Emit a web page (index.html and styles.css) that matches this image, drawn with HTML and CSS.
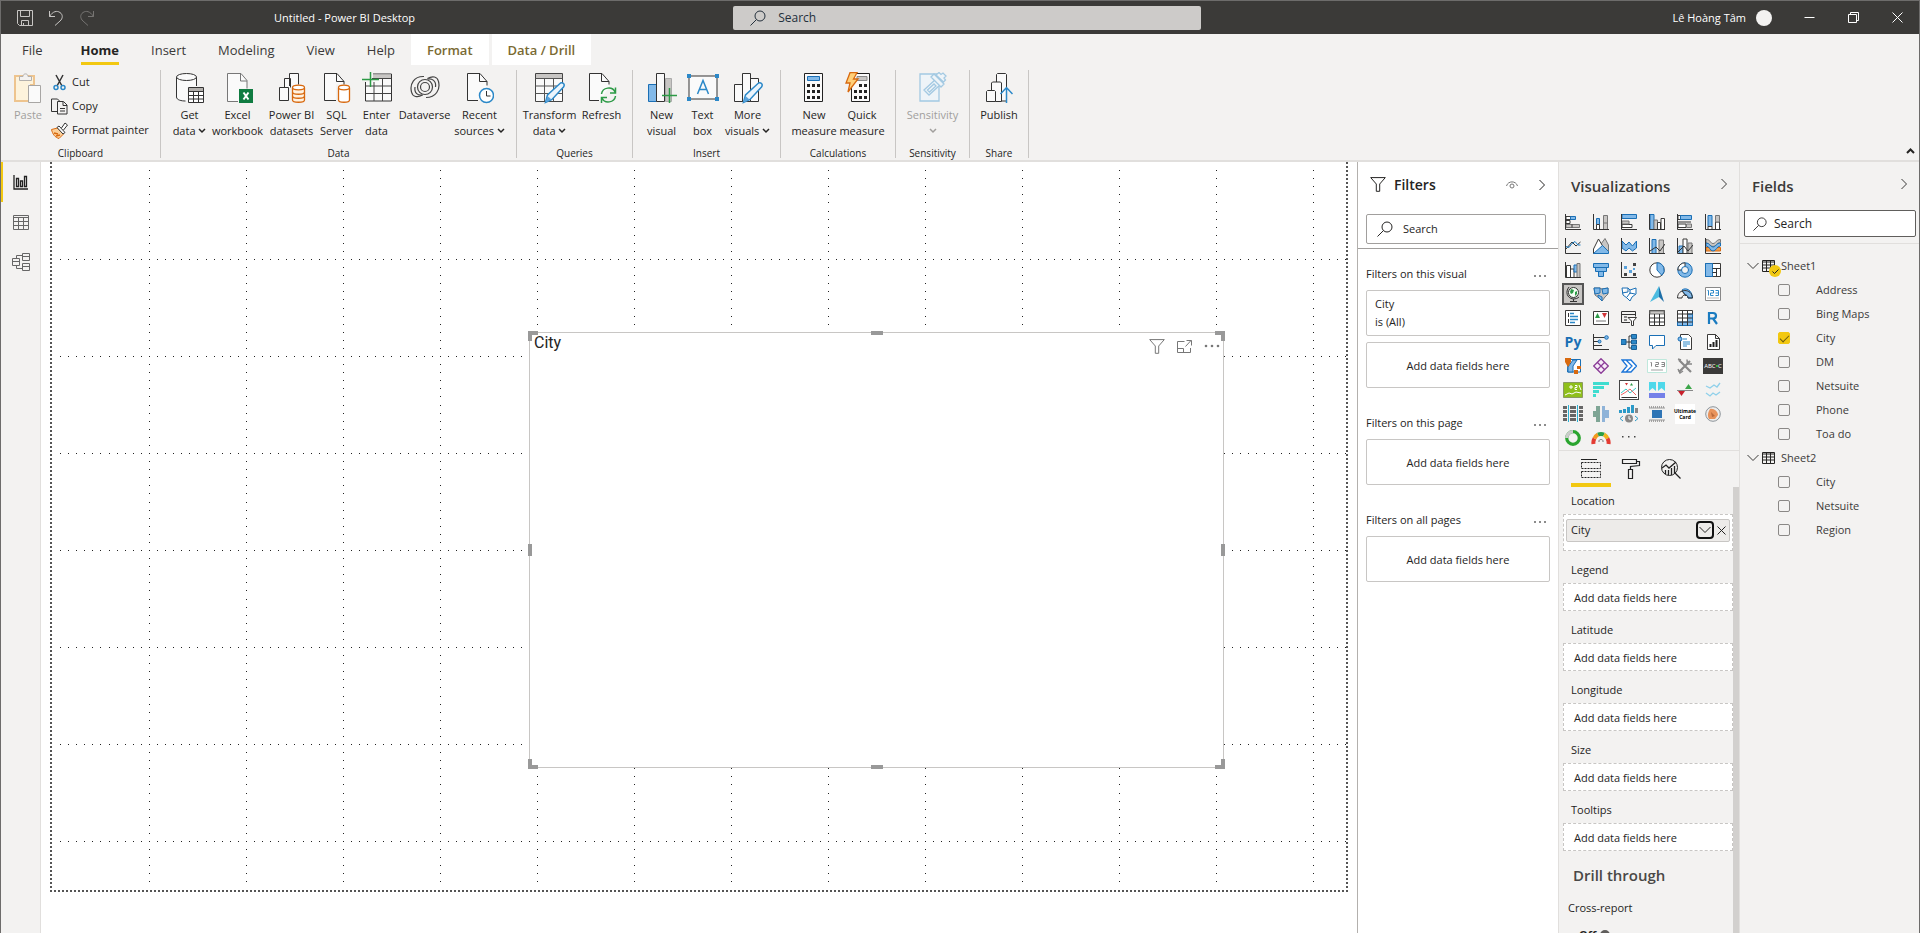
FILE: index.html
```html
<!DOCTYPE html>
<html lang="en">
<head>
<meta charset="utf-8">
<title>Untitled - Power BI Desktop</title>
<link rel="stylesheet" href="styles.css">
</head>
<body>
<svg class="defs" aria-hidden="true">
  <symbol id="chev" viewBox="0 0 8 12"><path d="M1.500 1l5 5-5 5"/></symbol>
  <symbol id="down" viewBox="0 0 8 6"><path d="M1 1l3 3 3-3"/></symbol>
  <symbol id="wide" viewBox="0 0 12 8"><path d="M.5 1L6 6.500 11.500 1"/></symbol>
  <symbol id="lens" viewBox="0 0 16 16"><circle cx="10" cy="6" r="5"/><path d="M6.500 9.500L.5 15.500"/></symbol>
  <symbol id="funnel" viewBox="0 0 16 15"><path d="M.7.600h14.600L9.700 7v7.300H6.300V7z"/></symbol>
  <symbol id="dots" viewBox="0 0 14 4"><circle cx="2" cy="2" r="1"/><circle cx="7" cy="2" r="1"/><circle cx="12" cy="2" r="1"/></symbol>
  <symbol id="grid" viewBox="0 0 13 12"><path d="M.500.500h12v11H.500zM.500 2h12M.500 5h12M.500 8h12M4.500 1v10.500M8.500 1v10.500"/></symbol>
</svg>
<div class="window">
  <header class="titlebar">
    <div class="title-left">
      <button class="tool" aria-label="Save"><svg width="16" height="16" viewBox="0 0 16 16"><path d="M.5.500h15v15h-13l-2-2zM3.500.500v6h9v-6M4.500 15.500v-5h7v5M6.500 13v2.500"/></svg></button>
      <button class="tool" aria-label="Undo"><svg width="16" height="16" viewBox="0 0 16 16"><path d="M1.500 1v5.500H7M1.500 6.500C5 1 9 .500 12 2.500s3 6 0 8.500l-5 4.500"/></svg></button>
      <button class="tool dim" aria-label="Redo"><svg width="16" height="16" viewBox="0 0 16 16"><path d="M14.500 1v5.500H9M14.500 6.500C11 1 7 .500 4 2.500s-3 6 0 8.500l5 4.500"/></svg></button>
      <h1 class="doc-title">Untitled - Power BI Desktop</h1>
    </div>
    <label class="title-search"><svg width="16" height="16"><use href="#lens"/></svg><input type="text" placeholder="Search" aria-label="Search"></label>
    <div class="title-right">
      <span>Lê Hoàng Tâm</span><span class="avatar"></span>
      <button class="win" aria-label="Minimize"><svg width="11" height="11" viewBox="0 0 11 11"><path d="M.5 5.500h10"/></svg></button>
      <button class="win" aria-label="Restore"><svg width="11" height="11" viewBox="0 0 11 11"><path d="M.5 2.500h8v8h-8zM2.500 2.500v-2h8v8h-2"/></svg></button>
      <button class="win" aria-label="Close"><svg width="11" height="11" viewBox="0 0 11 11"><path d="M.5.500l10 10M10.500.500l-10 10"/></svg></button>
    </div>
  </header>

  <nav class="tabs">
    <button class="tab file">File</button>
    <button class="tab on"><span>Home</span></button>
    <button class="tab">Insert</button>
    <button class="tab">Modeling</button>
    <button class="tab">View</button>
    <button class="tab">Help</button>
    <button class="tab ctx">Format</button>
    <button class="tab ctx">Data / Drill</button>
  </nav>

  <section class="ribbon">
    <div class="group g-clip"><div class="items">
      <button class="cmd w44 off"><svg width="28" height="32" viewBox="0 0 28 32"><path d="M5 4H1v25h13" fill="#fdf3dc" stroke="#eec48e" stroke-width="2"/><path d="M5 4h12v8h3V4h-3" fill="#fdf3dc" stroke="#eec48e" stroke-width="2"/><path d="M2 5h17v7h-5v16H2z" fill="#fdf3dc"/><path d="M5.500 8.500v-4h3.500C9 1 14 1 14 4.500h3.500v4z" fill="#f3f2f1" stroke="#b3b0ad"/><path d="M14.500 13.500h12v17h-12z" fill="#fafafa" stroke="#a8a6a4"/></svg><span>Paste</span></button>
      <div class="stack">
        <button class="line"><svg width="17" height="17" viewBox="0 0 17 17"><path d="M5 1l6 11M12 1L6 12" stroke="#333" stroke-width="1.500"/><circle cx="5" cy="13.500" r="2" fill="none" stroke="#2b88c8" stroke-width="1.500"/><circle cx="12" cy="13.500" r="2" fill="none" stroke="#2b88c8" stroke-width="1.500"/></svg>Cut</button>
        <button class="line"><svg width="17" height="17" viewBox="0 0 17 17"><path d="M7 13.500H.5V1h6l2 2M6.500 3.500h6l3.500 3.500v9H6.500zM12 4v3.500h4M9 10.500h5M9 13h5" fill="none" stroke="#333"/></svg>Copy</button>
        <button class="line"><svg width="17" height="17" viewBox="0 0 17 17"><path d="M.5 7.500l6-1.500 6 6-4.500 4.500C4 15.500 1.500 12 .5 7.500z" fill="#fbd09a" stroke="#d8690f"/><path d="M3 11l4 1M5 14l4-1" stroke="#d8690f" stroke-width="1.500"/><path d="M6 5.500L8 4l6 6.500-2 1.500zM10.500 6L14 1l2.500 2-4 5" fill="#fff" stroke="#333"/></svg>Format painter</button>
      </div></div><span class="cap">Clipboard</span></div>

    <div class="group g-data"><div class="items">
      <button class="cmd w42"><svg width="30" height="32" viewBox="0 0 30 32"><path d="M1.500 5v20c0 3 5 4 9 4h2V15h9V5" fill="#fafafa"/><path d="M1.500 5v20c0 3 5 4 9 4M21.500 5v9" fill="none" stroke="#333"/><ellipse cx="11.500" cy="5" rx="10" ry="3.500" fill="#fafafa" stroke="#333"/><path d="M13.500 15.500h15v15h-15z" fill="#fff" stroke="#333"/><path d="M14 16h14v3H14z" fill="#b3b0ad"/><path d="M13.500 19.500h15M13.500 23.500h15M13.500 27h15M18.500 19v12M23.500 19v12" stroke="#333"/></svg><span>Get<br>data <svg class="dd" width="8" height="6"><use href="#down"/></svg></span></button>
      <button class="cmd w54"><svg width="30" height="32" viewBox="0 0 30 32"><path d="M4.500 29.500V1.500H18l6 7v8h-8v13z" fill="#fafafa"/><path d="M15 29.500H4.500V1.500H18l6 7v8M17.500 2v7H24" fill="none" stroke="#777"/><path d="M16 17h14v14H16z" fill="#107c41"/><path d="M20.500 20.500l5 7M25.500 20.500l-5 7" stroke="#fff" stroke-width="2"/></svg><span>Excel<br>workbook</span></button>
      <button class="cmd w54"><svg width="28" height="32" viewBox="0 0 28 32"><path d="M6.500 15V6.500h6v9M11.500 14V1.500h9v11M1.500 15.500h9v13h-9z" fill="#fafafa" stroke="#333"/><path d="M14.500 16v12c0 3 12 3 12 0V16" fill="#fff2e0" stroke="#d8690f" stroke-width="1.300"/><ellipse cx="20.500" cy="15.500" rx="6" ry="2.300" fill="#fff" stroke="#d8690f" stroke-width="1.300"/><path d="M14.500 20c0 3 12 3 12 0M14.500 24c0 3 12 3 12 0" fill="none" stroke="#d8690f" stroke-width="1.300"/></svg><span>Power BI<br>datasets</span></button>
      <button class="cmd w36"><svg width="28" height="32" viewBox="0 0 28 32"><path d="M1.500 28.500v-27H14l7 8v3h-8v16z" fill="#fafafa"/><path d="M13 28.500H1.500v-27H14l7 8v3M13.500 2v7.500H21" fill="none" stroke="#333"/><path d="M15.500 16v12c0 3 11 3 11 0V16" fill="#fff" stroke="#d8690f" stroke-width="1.300"/><ellipse cx="21" cy="15.500" rx="5.500" ry="2.300" fill="#fff" stroke="#d8690f" stroke-width="1.300"/></svg><span>SQL<br>Server</span></button>
      <button class="cmd w44"><svg width="30" height="32" viewBox="0 0 30 32"><path d="M3.500 10v19h26v-27H11v8z" fill="#fafafa"/><path d="M3.500 10v19h26v-27H11" fill="none" stroke="#333"/><path d="M11 2.500h18v4H11z" fill="#c8c6c4"/><path d="M10 6.500h19.500M3.500 14h26M3.500 21.500h26M12 10v19M20.500 6v23" stroke="#444"/><path d="M8.500 0v15M0 7.500h17" stroke="#2c9a46" stroke-width="1.500"/></svg><span>Enter<br>data</span></button>
      <button class="cmd w52"><svg width="30" height="32" viewBox="0 0 30 32"><g fill="none" stroke="#444" stroke-width="1.200"><path d="M14 4.500C4 4-.5 12 1.500 20c1 5 6 6 11 3"/><path d="M16 25.500c10 0 14.500-8 12.500-16-1-5-6-6-11-3"/><circle cx="15" cy="15" r="4.500"/><circle cx="15" cy="15" r="7.500"/><path d="M12.500 23C8 24 4 21 5 15M17.500 7c4.500-1 9 2 8 8"/></g></svg><span>Dataverse</span></button>
      <button class="cmd w58"><svg width="28" height="32" viewBox="0 0 28 32"><path d="M1.500 28.500v-27H14l7 8v7l-9 12z" fill="#fafafa"/><path d="M12 28.500H1.500v-27H14l7 8v4M13.500 2v7.500H21" fill="none" stroke="#333"/><circle cx="20.500" cy="23.500" r="7" fill="#fff" stroke="#2b88c8" stroke-width="1.500"/><path d="M20.500 19v5h4" fill="none" stroke="#333"/></svg><span>Recent<br>sources <svg class="dd" width="8" height="6"><use href="#down"/></svg></span></button>
      </div><span class="cap">Data</span></div>

    <div class="group g-query"><div class="items">
      <button class="cmd w54"><svg width="30" height="32" viewBox="0 0 30 32"><path d="M.5 1.500h27v28H.5z" fill="#fafafa" stroke="#444"/><path d="M1 2h26v4H1z" fill="#c8c6c4"/><path d="M.5 6.500h27M.5 14h27M.5 21.500h27M9.500 6v23M18.500 6v23" stroke="#555"/><path d="M10.500 30.500l2-7.500 13-12c2-1 5 1 3 4L17 27.500z" fill="#eaf4fc" stroke="#2b88c8" stroke-width="1.500"/><path d="M10.500 30.500l2-6.500 4 3.500z" fill="#5ba3dc"/></svg><span>Transform<br>data <svg class="dd" width="8" height="6"><use href="#down"/></svg></span></button>
      <button class="cmd w50"><svg width="30" height="32" viewBox="0 0 30 32"><path d="M2.500 28.500v-27H15l7 8v6l-9 13z" fill="#fafafa"/><path d="M12 28.500H2.500v-27H15l7 8v3M14.500 2v7.500H22" fill="none" stroke="#333"/><path d="M14.500 22c1-7 11-8 13.500-2M28.500 24c-1 7-11 8-13.500 2M28.500 15.500V21H23M14.500 31v-5.500H20" fill="none" stroke="#2c9a46" stroke-width="1.500"/></svg><span>Refresh</span></button>
      </div><span class="cap">Queries</span></div>

    <div class="group g-insert"><div class="items">
      <button class="cmd w42"><svg width="30" height="32" viewBox="0 0 30 32"><path d="M18.500 6.500h6v23h-6z" fill="#c8c6c4" stroke="#aaa"/><path d="M1.500 12.500h8v17h-8z" fill="#82b9e8" stroke="#1a6fb5"/><path d="M9.500 1.500h8v28h-8z" fill="#fafafa" stroke="#333"/><path d="M22.500 16v15M15 23.500h15" stroke="#2c9a46" stroke-width="1.500"/></svg><span>New<br>visual</span></button>
      <button class="cmd w40"><svg width="32" height="32" viewBox="0 0 32 32"><path d="M2 4h28v23H2z" fill="#fafafa" stroke="#333"/><path d="M0 2h4v4H0zM28 2h4v4h-4zM0 25h4v4H0zM28 25h4v4h-4z" fill="#2b88c8"/><path d="M10.500 22L16 8.500 21.500 22M12.500 17.500h7" fill="none" stroke="#2b88c8" stroke-width="1.500"/></svg><span>Text<br>box</span></button>
      <button class="cmd w50"><svg width="30" height="32" viewBox="0 0 30 32"><path d="M17.500 6.500h8v23h-8zM1.500 12.500h8v17h-8zM9.500 1.500h8v28h-8z" fill="#fafafa" stroke="#333"/><path d="M10.500 30.500l2-7.500 13-12c2-1 5 1 3 4L17 27.500z" fill="#eaf4fc" stroke="#2b88c8" stroke-width="1.500"/><path d="M10.500 30.500l2-6.500 4 3.500z" fill="#5ba3dc"/></svg><span>More<br>visuals <svg class="dd" width="8" height="6"><use href="#down"/></svg></span></button>
      </div><span class="cap">Insert</span></div>

    <div class="group g-calc"><div class="items">
      <button class="cmd w48"><svg width="22" height="32" viewBox="0 0 22 32"><path d="M1.500 1.500h18v28h-18z" fill="#fafafa" stroke="#222"/><path d="M4.500 4.500h12v4h-12z" fill="#82b9e8" stroke="#1a6fb5"/><path d="M4 12h3v3H4zM9 12h3v3H9zM14 12h3v3h-3zM4 18h3v3H4zM9 18h3v3H9zM14 18h3v3h-3zM4 24h3v3H4zM9 24h3v3H9zM14 24h3v3h-3z" fill="#222"/></svg><span>New<br>measure</span></button>
      <button class="cmd w48 quick"><svg width="28" height="32" viewBox="0 0 28 32"><path d="M6.500 1.500h18v28h-18z" fill="#fafafa" stroke="#222"/><path d="M12 4.500h10v4H12z" fill="#c8c6c4" stroke="#888"/><path d="M14 12h3v3h-3zM19 12h3v3h-3zM9 18h3v3H9zM14 18h3v3h-3zM19 18h3v3h-3zM9 24h3v3H9zM14 24h3v3h-3zM19 24h3v3h-3z" fill="#222"/><path d="M5 .7h7L8.500 7H13L3 20l2-9H1z" fill="#ffd079" stroke="#d8690f" stroke-width="1.300"/></svg><span>Quick<br>measure</span></button>
      </div><span class="cap">Calculations</span></div>

    <div class="group g-sens"><div class="items">
      <button class="cmd w58 off"><svg width="28" height="32" viewBox="0 0 28 32"><g fill="#eef4f8" stroke="#a3c9e2" stroke-width="1.300"><path d="M1 2h19v27H1z"/><path d="M5 18L16 8l5 5L10 23zM8.500 18l2 2 6.500-6-2-2z"/><path d="M12 5l3-3 10 10-3 3zM17 3l3-2.500 2 2 2-1.500 3 3-2 2 1.500 2-2 2z"/></g></svg><span>Sensitivity<br><svg class="dd" width="8" height="6"><use href="#down"/></svg></span></button>
      </div><span class="cap">Sensitivity</span></div>

    <div class="group g-share"><div class="items">
      <button class="cmd w48"><svg width="28" height="32" viewBox="0 0 28 32"><path d="M11.500 10V2.500l1-1h8l1 1V29h-5M6.500 18v-7l1-1h8l1 1v18.500h-6M1.500 29.500v-10l1-1h7l1 1v10z" fill="#fafafa" stroke="#333"/><path d="M21.500 31V16M15.500 22l6-6.500 6 6.500" fill="none" stroke="#2b88c8" stroke-width="1.500"/></svg><span>Publish</span></button>
      </div><span class="cap">Share</span></div>
    <button class="collapse" aria-label="Collapse ribbon"><svg width="9" height="6" viewBox="0 0 9 6"><path d="M1 5l3.500-3.500L8 5"/></svg></button>
  </section>

  <main class="workspace">
    <nav class="rail">
      <button class="view on" aria-label="Report view"><svg width="15" height="15" viewBox="0 0 15 15"><path d="M1 0v14h14" fill="none" stroke="#222" stroke-width="1.300"/><path d="M3.500 3.500h2v8h-2zM7.500 6h2v5.500h-2zM11.500 1.500h2v10h-2z" fill="none" stroke="#222" stroke-width="1.300"/></svg></button>
      <button class="view" aria-label="Data view"><svg width="16" height="15" viewBox="0 0 16 15"><path d="M.5.500h15v14H.5zM.5 2.500h15M.5 6.500h15M.5 10.500h15M5.500 2.500v12M10.500 2.500v12" fill="none" stroke="#666"/></svg></button>
      <button class="view" aria-label="Model view"><svg width="18" height="18" viewBox="0 0 18 18"><path d="M.5 5.500h7v7h-7zM.5 8.500h7M10.500.500h7v7h-7zM10.500 3.500h7M10.500 10.500h7v7h-7zM10.500 13.500h7M4.500 5.500v-3h6M4.500 12.500v3h6" fill="none" stroke="#666"/></svg></button>
    </nav>

    <section class="canvas">
      <div class="page">
        <svg class="gridlines" width="100%" height="100%" aria-hidden="true">
          <defs><pattern id="dotgrid" width="97" height="97" patternUnits="userSpaceOnUse"><path fill="#222" d="M0 0h1v1H0zM8 0h1v1H8zM16 0h1v1h-1zM24 0h1v1h-1zM32 0h1v1h-1zM40 0h1v1h-1zM48 0h1v1h-1zM57 0h1v1h-1zM65 0h1v1h-1zM73 0h1v1h-1zM81 0h1v1h-1zM89 0h1v1h-1zM0 8h1v1H0zM0 16h1v1H0zM0 24h1v1H0zM0 32h1v1H0zM0 40h1v1H0zM0 49h1v1H0zM0 57h1v1H0zM0 65h1v1H0zM0 73h1v1H0zM0 81h1v1H0zM0 89h1v1H0z"/></pattern></defs>
          <rect x="2" y="2" width="100%" height="100%" fill="url(#dotgrid)"/>
        </svg>
        <article class="visual">
          <h2>City</h2>
          <div class="visual-tools">
            <button aria-label="Filter"><svg width="16" height="15"><use href="#funnel"/></svg></button>
            <button aria-label="Focus mode"><svg width="15" height="13" viewBox="0 0 15 13"><path d="M7.500 1.500H.5v11h13V8M.5 8.500h6v4M8.500 6.500l5.500-6M9.500.500h5v5"/></svg></button>
            <button aria-label="More options"><svg class="dots" width="16" height="4" viewBox="0 0 16 4"><circle cx="2" cy="2" r="1.300"/><circle cx="8" cy="2" r="1.300"/><circle cx="14" cy="2" r="1.300"/></svg></button>
          </div>
          <i class="h c tl"></i><i class="h c tr"></i><i class="h c bl"></i><i class="h c br"></i>
          <i class="h n"></i><i class="h s"></i><i class="h w"></i><i class="h e"></i>
        </article>
      </div>
    </section>

    <aside class="filters">
      <div class="head"><svg width="16" height="15"><use href="#funnel"/></svg><h2>Filters</h2>
        <button class="eye" aria-label="Hide filters"><svg width="12" height="8" viewBox="0 0 12 8"><path d="M.5 5C2-.500 10-.500 11.500 5" /><circle cx="6" cy="5" r="2"/></svg></button>
        <button aria-label="Collapse"><svg width="8" height="12"><use href="#chev"/></svg></button></div>
      <label class="search"><svg width="16" height="16"><use href="#lens"/></svg><input type="text" placeholder="Search" aria-label="Search filters"></label>
      <section class="fgroup"><h3>Filters on this visual<button aria-label="More"><svg class="dots" width="14" height="4"><use href="#dots"/></svg></button></h3>
        <div class="card">City<br>is (All)</div><div class="card drop">Add data fields here</div></section>
      <section class="fgroup"><h3>Filters on this page<button aria-label="More"><svg class="dots" width="14" height="4"><use href="#dots"/></svg></button></h3>
        <div class="card drop">Add data fields here</div></section>
      <section class="fgroup"><h3>Filters on all pages<button aria-label="More"><svg class="dots" width="14" height="4"><use href="#dots"/></svg></button></h3>
        <div class="card drop">Add data fields here</div></section>
    </aside>

    <aside class="viz">
      <div class="head"><h2>Visualizations</h2><button aria-label="Collapse"><svg width="8" height="12"><use href="#chev"/></svg></button></div>
      <div class="gallery">
        <button aria-label="Stacked bar chart"><svg viewBox="0 0 16 16"><path class="w" d="M1 2.500h5v3H1zM1 6.500h4v3H1z"/><path class="b" d="M5.500 2.500h5v3h-5z"/><path class="g" d="M1 10.500h13.500v3H1z"/><path class="k" d="M.500 0v15.500H16M7 10.500v3"/></svg></button>
        <button aria-label="Stacked column chart"><svg viewBox="0 0 16 16"><path class="b" d="M3.500 4.500h3v6h-3z"/><path class="w" d="M3.500 10.500h3v5h-3z"/><path class="g" d="M10.500 1.500h4v14h-4zM10.500 9h4"/><path class="k" d="M.500 0v15.500H16"/></svg></button>
        <button aria-label="Clustered bar chart"><svg viewBox="0 0 16 16"><path class="b" d="M1 .500h14.500v4H1z"/><path class="w" d="M1 10.500h10v3H1z"/><path class="g" d="M1 7h7v3H1z"/><path class="k" d="M.500 0v15.500H16"/></svg></button>
        <button aria-label="Clustered column chart"><svg viewBox="0 0 16 16"><path class="b" d="M1 .500h4v15H1z"/><path class="g" d="M5 6h3.500v9.500H5z"/><path class="w" d="M8.500 8.500h3v7h-3zM12 4.500h3.500v11H12z"/><path class="k" d="M.500 0v15.500H16"/></svg></button>
        <button aria-label="100% stacked bar chart"><svg viewBox="0 0 16 16"><path class="w" d="M1 1.500h3v4H1zM1 10h8v3.500H1z"/><path class="b" d="M3.500 1.500h11v4h-11z"/><path class="g" d="M9.500 10h5v3.500h-5z"/><path class="k" d="M.500 0v15.500H16M1 8h13"/></svg></button>
        <button aria-label="100% stacked column chart"><svg viewBox="0 0 16 16"><path class="b" d="M3 1.500h4v11H3z"/><path class="w" d="M3 12.500h4v3H3zM10.500 8h4v7.500h-4z"/><path class="g" d="M10.500 1.500h4V8h-4z"/><path class="k" d="M.500 0v15.500H16"/></svg></button>

        <button aria-label="Line chart"><svg viewBox="0 0 16 16"><path class="k" d="M.500 0v15.500H16M1 11l6-7 4 4 4.500-4"/><path class="bl" d="M1 8.500l3 1 3-4 3-2 3 3.500 2.500 0"/></svg></button>
        <button aria-label="Area chart"><svg viewBox="0 0 16 16"><path class="g" d="M8 6l4-5.500L15.500 7v8z"/><path class="w" d="M.5 11L5.500 1 12 12v3.500H.5z"/><path class="b" d="M.5 15.500l9-8 6 6v2z"/></svg></button>
        <button aria-label="Stacked area chart"><svg viewBox="0 0 16 16"><path class="b" d="M1 3l4 4 3-3 3.500 4 4-5v7l-4 3L8 10l-3 3-4-3z"/><path class="k" d="M.500 0v15.500H16"/></svg></button>
        <button aria-label="Line and stacked column chart"><svg viewBox="0 0 16 16"><path class="b" d="M3 1.500h4v14H3z"/><path class="g" d="M10 2h4.500v13.500H10z"/><path class="k" d="M.500 0v15.500H16M1 13l6-4 4 4 5-7"/></svg></button>
        <button aria-label="Line and clustered column chart"><svg viewBox="0 0 16 16"><path class="b" d="M2 8h4v7.500H2z"/><path class="w" d="M6 1h4v14.500H6z"/><path class="g" d="M11 5h4v10.500h-4z"/><path class="k" d="M.500 0v15.500H16M1 14l6-6 4 5 5-6"/></svg></button>
        <button aria-label="Ribbon chart"><svg viewBox="0 0 16 16"><path class="g" d="M1 1.500c5 0 4 4 7 4s3-4 7.500-4v3c-4 0-4 4-7.500 4S5 5 1 5z"/><path d="M1 9.500h14.500v3.500H1z" fill="#f0a050" stroke="#d8690f"/><path class="b" d="M1 5c4 0 4 4 7 4s3-4 7.500-4v3c-4 0-4 5-7.500 5S5 8 1 8z"/><path class="k" d="M.500 0v15.500H16"/></svg></button>

        <button aria-label="Waterfall chart"><svg viewBox="0 0 16 16"><path class="w" d="M1.500 3.500h4v12h-4zM5.500 7h3.500v8.500H5.500z"/><path class="b" d="M9 3h4v7H9z"/><path class="g" d="M12 1.500h3v14h-3z"/><path class="k" d="M.500 0v15.500H16"/></svg></button>
        <button aria-label="Funnel"><svg viewBox="0 0 16 16"><path class="b" d="M.500 1.500h15v4H.500zM2.500 5.500h11v4h-11zM5.500 9.500h5v5h-5z"/></svg></button>
        <button aria-label="Scatter chart"><svg viewBox="0 0 16 16"><path class="k" d="M.500 0v15.500H16"/><path d="M3 4h3v3H3zM8 8h3v3H8zM12 6h2v2h-2z" fill="#5ba3dc"/><path d="M12 1h3v3h-3zM3 11h3v3H3zM12 11h3v3h-3z" fill="#444"/></svg></button>
        <button aria-label="Pie chart"><svg viewBox="0 0 16 16"><circle class="w" cx="8" cy="8" r="7.200"/><path class="b" d="M8 .800V8l4.800 5.300A7.200 7.200 0 0 0 8 .800z"/></svg></button>
        <button aria-label="Donut chart"><svg viewBox="0 0 16 16"><circle class="b" cx="8" cy="8" r="7.200"/><path class="w" d="M8 8V.800A7.200 7.200 0 0 0 .800 8z"/><circle class="b hole" cx="8" cy="8" r="3.500"/></svg></button>
        <button aria-label="Treemap"><svg viewBox="0 0 16 16"><path class="w" d="M.500 1.500h15v13H.500z"/><path class="b" d="M.500 1.500h7v13h-7z"/><path class="k" d="M7.500 6.500h8M11.500 6.500v8M7.500 10.500h4"/></svg></button>

        <button class="picked" aria-label="Map"><svg viewBox="0 0 16 16"><circle cx="8.500" cy="6.500" r="5" fill="#f5fff5" stroke="#333"/><path d="M6 3l3 1-1 3-2 1-1-2zM10 6l2-1v3l-2 2z" fill="#2c9a46"/><path class="k" d="M4 1c-4 5-2 11 4 12 3 0 5-1 6-2M8.500 13v2M5 15.500h7"/></svg></button>
        <button aria-label="Filled map"><svg viewBox="0 0 16 16"><path class="g" d="M1 2h6l2 1 6-1v6l-3 3-3 4-3-3-4-3z"/><path class="b" d="M1 2h6v5L2 8zM9 3l6-1v5l-5 1zM5 9l4 2v4l-4-4z"/></svg></button>
        <button aria-label="Shape map"><svg viewBox="0 0 16 16"><path class="w bs" d="M1 2h6l2 2 6-2v6l-4 3-2 4-3-3-4-3zM1 7l6-1v-4M6 11l3-4 5 1M9 4v4"/></svg></button>
        <button aria-label="Azure map"><svg viewBox="0 0 16 16"><path d="M10 0L1 16l9-5z" fill="#4cbbe0"/><path d="M10 0l5 16-5-5z" fill="#1d6fa8"/></svg></button>
        <button aria-label="Gauge"><svg viewBox="0 0 16 16"><path class="b" d="M5 4C9 1 15 4 15.500 12H11c0-2-1-3-3-3.500z"/><path class="k" d="M.500 12C.500 2 15 2 15.500 12H11C11 8 5 8 5 12zM5 5l4 5"/></svg></button>
        <button aria-label="Card"><svg viewBox="0 0 16 16"><path d="M.500 1.500h15v13H.500z" fill="#fff" stroke="#888"/><path d="M2.500 4.500h1v5M5.500 4.500h3v2.500h-3v2.500h3M10.500 4.500h3v5h-3M10.500 7h3" fill="none" stroke="#2b88c8"/><path d="M2 12h12" stroke="#bbb"/></svg></button>

        <button aria-label="Multi-row card"><svg viewBox="0 0 16 16"><path class="w" d="M.500.500h15v15H.500z"/><path d="M3.500 3v4M3.500 9v4" stroke="#333"/><path d="M5 3.500h4M5 6.500h8M5 9.500h8M5 12.500h5" stroke="#2b88c8" stroke-width="1.300"/></svg></button>
        <button aria-label="KPI"><svg viewBox="0 0 16 16"><path class="w" d="M.500 1.500h15v13H.500z"/><path d="M2 8l2.500-5L7 8z" fill="#2c9a46"/><path d="M9 3h5l-2.500 5z" fill="#d13438"/><path d="M3 11h10" stroke="#777"/></svg></button>
        <button aria-label="Slicer"><svg viewBox="0 0 16 16"><path class="k" d="M9 12.500H.500v-11h14v5M.500 4.500h14"/><path d="M3 6h3v2H3zM3 9h3v2H3z" fill="#888"/><path class="w" d="M7 7.500h8.500L12.500 11v4.500h-2V11z"/></svg></button>
        <button aria-label="Table"><svg viewBox="0 0 16 16"><path class="w" d="M.500.500h15v15H.500z"/><path class="g" d="M1 1h14v3H1z"/><path class="k" d="M.500 8h15M.500 12h15M5.500 4v11M10.500 4v11"/></svg></button>
        <button aria-label="Matrix"><svg viewBox="0 0 16 16"><path class="w" d="M.500.500h15v15H.500z"/><path class="b" d="M10.500 4h5v11.500H.500V12h10z"/><path class="k" d="M.500 4h15M.500 8h15M.500 12h15M5.500.500v15M10.500.500v15"/></svg></button>
        <button aria-label="R script visual"><svg viewBox="0 0 16 16"><path d="M4 14V3h4c4 0 4 5.500 0 5.500H4M8 8.500l4 5.500" fill="none" stroke="#1a7bc0" stroke-width="2.200"/></svg></button>

        <button class="py">Py</button>
        <button aria-label="Key influencers"><svg viewBox="0 0 16 16"><path class="k" d="M.500 0v15.500H16M1 3.500h12M1 7.500h5M1 11.500h8"/><circle class="b" cx="13.500" cy="3.500" r="1.800"/><circle class="b" cx="6.500" cy="7.500" r="1.500"/></svg></button>
        <button aria-label="Decomposition tree"><svg viewBox="0 0 16 16"><path class="k" d="M4 8h8M8 2v12M8 2h4M8 14h4"/><path d="M0 5.500h5v5H0zM10.500.500h5v4h-5zM10.500 6h5v4h-5zM10.500 11.500h5v4h-5z" fill="#2b88c8" stroke="#1a5f95"/></svg></button>
        <button aria-label="Q&amp;A"><svg viewBox="0 0 16 16"><path class="w bs" d="M.500 1.500h15v10H7L3.500 15v-3.500h-3z"/></svg></button>
        <button aria-label="Smart narrative"><svg viewBox="0 0 16 16"><path class="w" d="M3.500.500h8l3 3v12h-11z"/><circle class="b" cx="3" cy="5" r="2"/><path d="M6 5h4M6 8h7M6 10h7M6 12h4" stroke="#2b88c8"/></svg></button>
        <button aria-label="Paginated report"><svg viewBox="0 0 16 16"><path class="w" d="M2.500.500h8l4 4v11h-12zM10.500.500v4h4"/><path d="M5.500 13v-3M8.500 13V8M11.500 13V6" stroke="#222" stroke-width="2"/></svg></button>

        <button aria-label="ArcGIS maps"><svg viewBox="0 0 16 16"><path class="w bs" d="M3 1.500h12.500v12.500H2.500z"/><path class="b" d="M8 2h4l-4 6v6H3V9z"/><path d="M0 0h6v4L3 9 0 4zM12 8h4v3h-4zM9 12h4v4H9z" fill="#d8690f"/></svg></button>
        <button aria-label="Power Apps"><svg viewBox="0 0 16 16"><path d="M8 .700L15.300 8 8 15.300.700 8zM4.500 4.500l7 7M11.500 4.500l-7 7" fill="#f7ecf8" stroke="#8a3a97" stroke-width="1.300"/></svg></button>
        <button aria-label="Power Automate"><svg viewBox="0 0 16 16"><path d="M1 2h9l5.500 6-5.500 6H1l5-6zM5 2l6 6-6 6" fill="#fff" stroke="#1b74d8" stroke-width="1.300"/></svg></button>
        <button aria-label="Number card"><svg viewBox="0 0 20 16"><path d="M.500 1.500h19v13H.500z" fill="#fff" stroke="#bfe8dc"/><path d="M3.500 4.500h1v4M8.500 4.500h3v2h-3v2h3M14.500 4.500h3v4h-3M14.500 6.500h3" fill="none" stroke="#888"/><path d="M4 12h12" stroke="#d0d0d0" stroke-width="2"/></svg></button>
        <button aria-label="Tools visual"><svg viewBox="0 0 16 16"><path d="M2 2l12 12M13 3L2 14" stroke="#888" stroke-width="2.200"/><path d="M10 1.500L10.500 6l4.500 0M1 1l3 1M1 11l2 4 3-2" fill="none" stroke="#888" stroke-width="1.500"/></svg></button>
        <button class="abc"><span>ABC<b>●</b>C</span></button>

        <button aria-label="Sparkline card"><svg viewBox="0 0 20 16"><path d="M.500.500h19v15H.500z" fill="#8fbf1a" stroke="#8a9a60"/><path d="M2 13l4-2 3 1 4-2 5 1M6 5h4M8 3v4M12 3.500h2v2h-2v2h2M16 3l2 5" stroke="#fff" fill="none"/></svg></button>
        <button aria-label="Bar ranking"><svg viewBox="0 0 16 16"><path d="M0 0h16v3H0zM0 4h11v3H0zM0 8h6v3H0zM0 12h3v3H0z" fill="#3fdccf"/></svg></button>
        <button class="framed" aria-label="Trend card"><svg viewBox="0 0 16 16"><path d="M4 1h3L5.500 3.500z" fill="#d13438"/><path d="M9 3.500h3L10.500 1z" fill="#2c9a46"/><path d="M0 11l5-4 4 4 6-5" stroke="#3cc" fill="none"/><path d="M0 13l5-3 4-3 6 6" stroke="#e66" fill="none"/><path class="k" d="M.500 15.500H16"/></svg></button>
        <button aria-label="Bookmark navigator"><svg viewBox="0 0 16 16"><path d="M0 0h7v9L3.500 6 0 9zM9 0h7v9l-3.500-3L9 9z" fill="#4fd8ea"/><path d="M0 11h16v5H0z" fill="#7480e8"/></svg></button>
        <button aria-label="Variance"><svg viewBox="0 0 16 16"><path d="M8 7l3.500-5L15 7z" fill="#3da64a"/><path d="M1 9h7l-3.500 5z" fill="#c8202c"/><path d="M0 8.500h16" stroke="#888"/></svg></button>
        <button aria-label="Multi line"><svg viewBox="0 0 16 16"><path d="M1 4l4 2 4-3 3 2 3-4M1 11l4 3 3-3 3 2 4-3" fill="none" stroke="#8fd0ea" stroke-width="1.300"/></svg></button>

        <button aria-label="Column table"><svg viewBox="0 0 20 18"><path d="M0 1h4v3H0zM0 5h4v3H0zM0 9h4v3H0zM0 13h4v3H0zM16 1h4v3h-4zM16 5h4v3h-4zM16 9h4v3h-4zM16 13h4v3h-4zM7 1h6v3H7zM7 5h6v3H7zM7 9h6v3H7zM7 13h6v3H7z" fill="#666"/><path d="M5.500 0v17M14.500 0v17" stroke="#2bb3d6"/></svg></button>
        <button aria-label="Tornado"><svg viewBox="0 0 16 16"><path d="M0 5h3V0h4v16H3v-5H0z" fill="#7fa595"/><path d="M9 0h3v4h4v8h-4v4H9z" fill="#8fb3d8"/></svg></button>
        <button aria-label="Time slicer"><svg viewBox="0 0 20 18"><path d="M0 5h3v3H0zM4 4h3v4H4zM8 2h3v6H8zM12 0h3v8h-3z" fill="#2b9ac8"/><path d="M16 3h3v5h-3z" fill="#888"/><circle cx="10" cy="13.500" r="4" fill="#888"/><path d="M10 11v3h2" stroke="#fff" fill="none"/><path d="M4 11l-3 2.500L4 16M16 11l3 2.500-3 2.500" fill="none" stroke="#2b9ac8"/></svg></button>
        <button aria-label="Scroller"><svg viewBox="0 0 16 16"><path d="M0 1h16M0 15h16" stroke="#555" stroke-dasharray="1 1"/><path d="M0 2h16M0 14h16" stroke="#999"/><path d="M3 4h10v8H3z" fill="#2f75b5"/></svg></button>
        <button class="ult"><span>Ultimate<br>Card</span></button>
        <button aria-label="Radar"><svg viewBox="0 0 16 16"><circle cx="8" cy="8" r="7.300" fill="#ececec" stroke="#8d949a"/><path d="M5 3c4-1 8 3 8 6l-3 4H4c-2-3-1-7 1-10z" fill="#e8935c"/><path d="M6 6l4 4-3 1z" fill="#b96a3c"/></svg></button>

        <button aria-label="Ring"><svg viewBox="0 0 16 16"><circle cx="8" cy="8" r="6.300" fill="none" stroke="#2aa52f" stroke-width="3.200"/><path d="M1.700 8A6.300 6.300 0 0 1 8 1.700" fill="none" stroke="#ccc" stroke-width="3.200"/></svg></button>
        <button aria-label="Dial gauge"><svg viewBox="0 0 20 16"><g fill="none" stroke-width="4"><path d="M2.500 14a8 8 0 0 1 1-5.500" stroke="#e43b32"/><path d="M3.500 8.500A8 8 0 0 1 7 4.500" stroke="#f29a1d"/><path d="M7 4.500a8 8 0 0 1 6 0" stroke="#2a9d48"/><path d="M13 4.500a8 8 0 0 1 3.500 4" stroke="#f2b51d"/><path d="M16.500 8.500a8 8 0 0 1 1 5.500" stroke="#e43b32"/></g><path d="M8 12v-1c0-2 4-2 4 0v1" fill="none" stroke="#777"/></svg></button>
        <button aria-label="Get more visuals"><svg viewBox="0 0 16 16"><path d="M1 6h1.500v1.500H1zM7 6h1.500v1.500H7zM13 6h1.500v1.500H13z" fill="#444"/></svg></button>
      </div>

      <div class="modes">
        <button class="on" aria-label="Fields"><svg width="20" height="20" viewBox="0 0 20 20"><path d="M0 .500h16" stroke="#222"/><path d="M.500 3.500h19v6H.500zM.500 12.500h19v6H.500z" fill="none" stroke="#222" stroke-dasharray="2 1"/></svg></button>
        <button aria-label="Format"><svg width="20" height="20" viewBox="0 0 20 20"><path d="M1.500.500h14v4h-14zM15.500 2.500h3v4l-9 1v3M7.500 10.500h4v9h-4z" fill="none" stroke="#222" stroke-width="1.200"/></svg></button>
        <button aria-label="Analytics"><svg width="20" height="20" viewBox="0 0 20 20"><circle cx="8.500" cy="8.500" r="8" fill="none" stroke="#222"/><path d="M14 14l5.500 5.500M1 9l4-3 3 3 7-6M4.500 15v-4M7.500 16v-5M10.500 16V9M13.500 14V7" fill="none" stroke="#222" stroke-width="1.300"/></svg></button>
      </div>
      <div class="wells">
        <h3>Location</h3>
        <div class="well filled"><div class="pill"><span>City</span><button class="menu" aria-label="City options"><svg width="12" height="8"><use href="#wide"/></svg></button><button aria-label="Remove City"><svg width="9" height="9" viewBox="0 0 9 9"><path d="M.5.500l8 8M8.500.500l-8 8"/></svg></button></div></div>
        <h3>Legend</h3><div class="well">Add data fields here</div>
        <h3>Latitude</h3><div class="well">Add data fields here</div>
        <h3>Longitude</h3><div class="well">Add data fields here</div>
        <h3>Size</h3><div class="well">Add data fields here</div>
        <h3>Tooltips</h3><div class="well">Add data fields here</div>
        <h2>Drill through</h2>
        <p>Cross-report</p>
        <button class="toggle">Off <i></i></button>
      </div>
    </aside>

    <aside class="fields">
      <div class="head"><h2>Fields</h2><button aria-label="Collapse"><svg width="8" height="12"><use href="#chev"/></svg></button></div>
      <label class="search"><svg width="14" height="14" viewBox="0 0 16 16"><use href="#lens"/></svg><input type="text" placeholder="Search" aria-label="Search fields"></label>
      <div class="tree">
        <button class="table"><svg width="12" height="8"><use href="#wide"/></svg><svg class="sheet" width="13" height="12"><use href="#grid"/></svg><i class="badge"><svg width="7" height="5" viewBox="0 0 7 5"><path d="M.5 2.500l2 2 4-4"/></svg></i>Sheet1</button>
        <label><input type="checkbox">Address</label>
        <label><input type="checkbox">Bing Maps</label>
        <label><input type="checkbox" checked>City</label>
        <label><input type="checkbox">DM</label>
        <label><input type="checkbox">Netsuite</label>
        <label><input type="checkbox">Phone</label>
        <label><input type="checkbox">Toa do</label>
        <button class="table"><svg width="12" height="8"><use href="#wide"/></svg><svg class="sheet" width="13" height="12"><use href="#grid"/></svg>Sheet2</button>
        <label><input type="checkbox">City</label>
        <label><input type="checkbox">Netsuite</label>
        <label><input type="checkbox">Region</label>
      </div>
    </aside>
  </main>
</div>
</body>
</html>
```
FILE: styles.css
```css
* { box-sizing: border-box; }
body { margin: 0; font: 11px/16px "Segoe UI", "Open Sans", sans-serif; color: #252423; background: #f3f2f1; }
h1, h2, h3, p { margin: 0; font-size: 11px; font-weight: 400; }
button { margin: 0; padding: 0; border: 0; background: none; font: inherit; color: inherit; display: flex; align-items: center; justify-content: center; }
input { font: inherit; color: inherit; border: 0; background: none; padding: 0; margin: 0; min-width: 0; outline: 0; }
input::placeholder { color: inherit; opacity: 1; }
svg { display: block; flex: none; fill: none; stroke: currentColor; }
.cmd > svg, .line svg, .gallery svg { stroke: none; }
.defs { position: absolute; width: 0; height: 0; }
.dots { fill: currentColor; stroke: none; }

.window { height: 100vh; display: flex; flex-direction: column; overflow: hidden; border: 1px solid #6d6c6b; border-bottom: 0; }

/* Title bar */
.titlebar { flex: none; height: 33px; background: #3b3a38; color: #fff; display: grid; grid-template-columns: 51fr minmax(200px, 468px) 50fr; align-items: center; }
.title-left { display: flex; align-items: center; gap: 15px; padding-left: 16px; }
.tool { color: #c8c6c4; }
.tool.dim { color: #767472; }
.doc-title { margin-left: 164px; font-size: 11px; }
.title-search { height: 24px; background: #cdcbc9; color: #24303c; border-radius: 2px; display: flex; align-items: center; gap: 12px; padding-left: 17px; font-size: 12px; }
.title-search input { flex: 1; }
.title-right { display: flex; align-items: center; justify-content: flex-end; }
.avatar { width: 16px; height: 16px; border-radius: 50%; background: #f3f2f1; margin: 0 15px 0 10px; }
.win { width: 44px; height: 32px; }

/* Ribbon tabs */
.tabs { flex: none; height: 31px; display: flex; padding-left: 5px; font-size: 13px; }
.tab { padding: 0 16px; color: #3b3a39; }
.tab.file { margin-right: 6px; }
.tab.on { font-weight: 700; align-items: stretch; color: #252423; }
.tab.on span { display: flex; align-items: center; border-bottom: 3px solid #f2c811; border-top: 3px solid transparent; }
.tab.ctx { background: #fff; color: #7a6a33; font-weight: 600; margin-right: 3px; }

/* Ribbon */
.ribbon { flex: none; display: flex; padding-top: 5px; border-bottom: 2px solid #e1dfdd; position: relative; }
.group { display: flex; flex-direction: column; align-items: center; border-right: 1px solid #c8c6c4; height: 88px; margin-bottom: 2px; }
.items { flex: 1; display: flex; }
.cap { font-size: 10px; line-height: 10px; }
.g-clip { width: 160px; }
.g-clip .items { width: 100%; padding-left: 5px; }
.g-data { width: 356px; }
.g-query { width: 116px; }
.g-insert { width: 148px; }
.g-calc { width: 115px; }
.g-sens { width: 74px; }
.g-share { width: 59px; }
.cmd { flex-direction: column; justify-content: flex-start; padding-top: 2px; white-space: nowrap; }
.cmd > svg { margin-bottom: 3px; }
.cmd.off { color: #a19f9d; }
.cmd.quick > svg { margin-right: 6px; }
.dd { display: inline-block; vertical-align: 1px; stroke-width: 1.5; }
.w36 { width: 36px; } .w40 { width: 40px; } .w42 { width: 42px; } .w44 { width: 44px; }
.w48 { width: 48px; } .w50 { width: 50px; } .w52 { width: 52px; }
.w54 { width: 54px; } .w58 { width: 58px; }
.stack { display: flex; flex-direction: column; margin-left: 1px; }
.line { height: 24px; gap: 4px; justify-content: flex-start; white-space: nowrap; }
.collapse { position: absolute; right: 4px; bottom: 6px; }
.collapse svg { stroke-width: 2; }

/* Workspace */
.workspace { flex: 1; min-height: 0; display: flex; }
.rail { flex: none; width: 40px; border-right: 1px solid #e1dfdd; }
.view { width: 100%; height: 40px; border-left: 2px solid transparent; padding-right: 2px; }
.view.on { border-left-color: #f2c811; }
.canvas { flex: 1; min-width: 0; background: #fff; padding: 0 9px; overflow: hidden; }
.page { position: relative; aspect-ratio: 16 / 9; border: 2px dotted #555; border-top: 0; }
.gridlines { stroke: none; }
.visual { position: absolute; left: 477px; top: 170px; width: 695px; height: 436px; background: #fff; border: 1px solid #c8c6c4; display: flex; justify-content: space-between; padding: 1px 3px 1px 4px; }
.visual h2 { font: 16px/18px Roboto, sans-serif; }
.visual-tools { display: flex; align-items: center; gap: 12px; height: 24px; color: #777; }
.h { position: absolute; background: #999; }
.h.c { width: 10px; height: 10px; background: none; border: 0 solid #999; }
.h.tl { left: -2px; top: -2px; border-width: 4px 0 0 4px; }
.h.tr { right: -2px; top: -2px; border-width: 4px 4px 0 0; }
.h.bl { left: -2px; bottom: -2px; border-width: 0 0 4px 4px; }
.h.br { right: -2px; bottom: -2px; border-width: 0 4px 4px 0; }
.n, .s { width: 12px; height: 4px; left: calc(50% - 6px); }
.n { top: -2px; } .s { bottom: -2px; }
.w.h, .e.h { width: 4px; height: 12px; top: calc(50% - 6px); }
.w.h { left: -2px; } .e.h { right: -2px; }

/* Side panes */
.head { display: flex; align-items: center; color: #3b3a39; }
.head h2 { flex: 1; font-size: 15px; line-height: 20px; font-weight: 600; }
.search { display: flex; align-items: center; background: #fff; border: 1px solid #a19f9d; border-radius: 2px; font-size: 12px; }
.search input { flex: 1; }

.filters { flex: none; width: 201px; background: #fff; border-left: 1px solid #b3b0ad; }
.filters .head { height: 45px; padding: 0 12px; gap: 8px; color: #252423; }
.filters .head h2 { font-size: 14px; }
.filters .eye { color: #777; margin-right: 12px; }
.filters .search { height: 30px; margin: 7px 12px 4px 8px; padding-left: 10px; gap: 10px; font-size: 11px; }
.fgroup { padding: 0 8px; margin-bottom: 26px; }
.search + .fgroup { border-top: 1px solid #a19f9d; padding-top: 16px; }
.fgroup h3 { display: flex; justify-content: space-between; line-height: 18px; margin-bottom: 7px; }
.fgroup h3 button { margin: 3px 3px 0 0; color: #666; }
.card { height: 46px; border: 1px solid #c8c6c4; border-radius: 2px; padding: 4px 8px; line-height: 18px; margin-bottom: 6px; }
.card.drop { display: flex; align-items: center; justify-content: center; padding: 1px 0 0; }

.viz { flex: none; width: 181px; border-left: 1px solid #e1dfdd; display: flex; flex-direction: column; overflow: hidden; }
.viz .head, .fields .head { height: 48px; padding: 0 11px 0 12px; }
.viz .head button, .fields .head button { margin-bottom: 4px; }
.gallery { display: grid; grid-template-columns: repeat(6, 28px); grid-auto-rows: 24px; }
.gallery svg { width: 16px; height: 16px; }
.gallery svg[viewBox^="0 0 20"] { width: 20px; height: 18px; }
.gallery .picked { width: 22px; height: 22px; border: 2px solid #555; background: #c8c6c4; margin: 1px 3px; }
.gallery .framed { width: 20px; height: 20px; border: 1px solid #444; background: #fff; margin: 2px 4px; }
.gallery .w { fill: #fff; stroke: #3b3a39; }
.gallery .w.bs { stroke: #1a6fb5; }
.gallery .b { fill: #82b9e8; stroke: #1a6fb5; }
.gallery .b.hole { fill: #f3f2f1; }
.gallery .g { fill: #c8c6c4; stroke: #777; }
.gallery .k { fill: none; stroke: #333; }
.gallery .bl { fill: none; stroke: #1a7bc0; }
.py { font-weight: 700; font-size: 14px; color: #1a6fb5; }
.abc span { height: 16px; padding: 0 1px; background: #3b3a39; color: #fff; font-size: 6px; display: flex; justify-content: center; }
.abc b { color: #3e3; font-size: 4px; }
.ult span { width: 20px; height: 20px; background: #fff; color: #000; font-size: 5px; line-height: 6px; font-weight: 700; display: flex; align-items: center; justify-content: center; text-align: center; }
.modes { flex: none; display: flex; border-top: 1px solid #e1dfdd; padding-left: 12px; height: 37px; }
.modes button { width: 40px; border-bottom: 4px solid transparent; padding-top: 3px; }
.modes .on { border-bottom-color: #f2c811; }
.wells { flex: 1; min-height: 0; overflow: hidden; border-right: 6px solid #d2d0ce; padding-left: 4px; }
.wells h3 { padding-left: 8px; line-height: 18px; margin: 5px 0 4px; }
.well + h3 { margin-top: 10px; }
.well { height: 28px; background: #fff; border: 1px dashed #c8c6c4; padding: 1px 0 0 10px; display: flex; align-items: center; }
.well.filled { height: 37px; padding: 3px 2px 8px; }
.pill { flex: 1; height: 23px; background: #edebe9; border: 1px solid #c8c6c4; border-radius: 2px; display: flex; align-items: center; gap: 3px; padding: 0 3px 0 4px; }
.pill span { flex: 1; }
.pill .menu { width: 18px; height: 18px; border: 2px solid #111; border-radius: 4px; }
.wells h2 { font-size: 15px; line-height: 20px; font-weight: 600; color: #4a4846; padding-left: 10px; margin: 14px 0 15px; }
.wells p { padding-left: 5px; line-height: 16px; }
.toggle { font-weight: 700; gap: 4px; margin: 11px 0 0 16px; }
.toggle i { width: 10px; height: 10px; border-radius: 50%; background: #605e5c; }

.fields { flex: none; width: 180px; border-left: 1px solid #e1dfdd; }
.fields .search { height: 27px; margin: 0 3px 6px 4px; padding-left: 8px; gap: 7px; border-color: #605e5c; }
.tree { border-top: 1px solid #e1dfdd; padding-top: 10px; color: #3b3a39; }
.tree label, .table { height: 24px; display: flex; align-items: center; justify-content: flex-start; }
.tree label { padding-left: 38px; gap: 26px; }
.tree input { appearance: none; width: 12px; height: 12px; border: 1px solid #8a8886; border-radius: 2px; display: grid; place-items: center; }
.tree input:checked { border-color: #f2c811; background: #f2c811; }
.tree input:checked::after { content: ""; width: 8px; height: 4px; border: solid #6b5a10; border-width: 0 0 1px 1px; rotate: -45deg; margin-bottom: 2px; }
.table { position: relative; width: 100%; padding-left: 7px; gap: 3px; }
.table .sheet { color: #252423; margin-right: 3px; }
.badge { position: absolute; left: 29px; top: 11px; width: 12px; height: 12px; border-radius: 50%; background: #f2c811; display: flex; align-items: center; justify-content: center; color: #222; }
```
